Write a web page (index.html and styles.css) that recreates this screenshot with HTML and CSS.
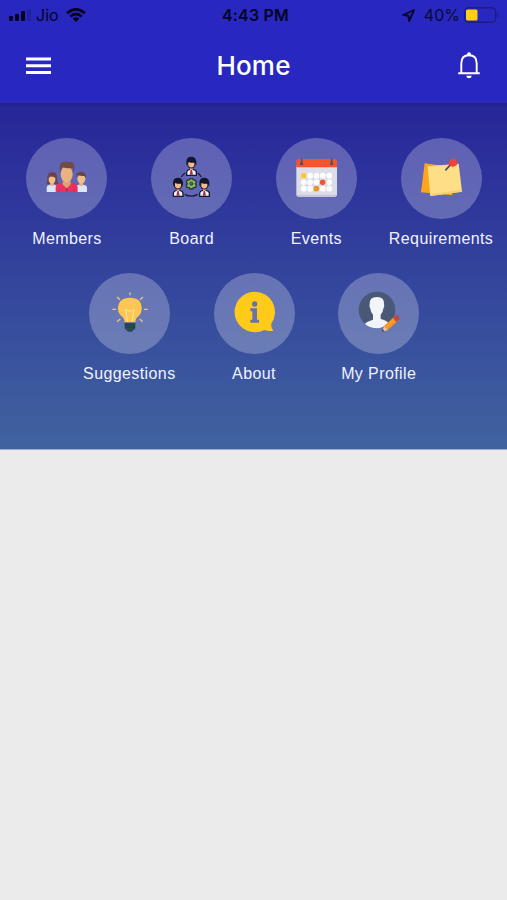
FILE: index.html
```html
<!DOCTYPE html>
<html lang="en">
<head>
<meta charset="utf-8">
<title>Home</title>
<link rel="stylesheet" href="styles.css">
</head>
<body>
<header class="top">
  <div class="status">
    <div class="carrier">
      <svg class="signal" width="24" height="12" viewBox="0 0 24 12"><rect x="0" y="7" width="4" height="5" rx="1"/><rect x="6" y="5" width="4" height="7" rx="1"/><rect x="12" y="2" width="4" height="10" rx="1"/><rect x="18" y="0" width="4" height="12" rx="1" opacity=".18"/></svg>
      <span class="jio">Jio</span>
      <svg class="wifi" width="20" height="14" viewBox="0 0 20 14"><g fill="none" stroke="#050520" stroke-width="2.700"><path d="M1 5.200Q10-2.600 19 5.200"/><path d="M4.200 8.600Q10 3.400 15.800 8.600"/></g><path d="M6.600 10.600Q10 7.700 13.400 10.600L10 14z"/></svg>
    </div>
    <div class="time">4:43 PM</div>
    <div class="power">
      <svg width="13" height="13" viewBox="0 0 13 13"><path d="M12 1L1.200 6.100l5.100.700.800 5.200z" fill="none" stroke="#080830" stroke-width="1.900" stroke-linejoin="round"/></svg>
      <span class="percent">40%</span>
      <svg class="battery" width="36" height="16" viewBox="0 0 36 16"><rect x=".7" y=".7" width="31" height="14.600" rx="4" fill="none" stroke="#1b1b82" stroke-width="1.400"/><path d="M33.200 5.500q2.400 2.500 0 5z" fill="#1b1b82"/><rect x="2" y="2.500" width="11.500" height="11" rx="1.500" fill="#ffd00c"/></svg>
    </div>
  </div>
  <div class="bar">
    <svg class="menu" width="25" height="18" viewBox="0 0 25 18" fill="#fff"><path d="M0 .5h25v3H0zM0 7.200h25v3H0zM0 14h25v3H0z"/></svg>
    <h1>Home</h1>
    <svg class="bell" width="24" height="28" viewBox="0 0 24 28"><path d="M1.200 22.300h21.600M4.300 21.500V12.500Q4.300 4.300 12 4.300t7.700 8.200v9" fill="none" stroke="#fff" stroke-width="1.900"/><circle cx="12" cy="3.200" r="2" fill="#fff"/><path d="M9.200 24.800h5.600q-.5 2.500-2.800 2.500t-2.800-2.500z" fill="#fff"/></svg>
  </div>
</header>
<main class="panel">
  <div class="item"><div class="disc">
    <svg viewBox="19 25 243 243">
      <path d="M81 187v-13q0-7 10-9h12q10 2 10 9v13zM167 187v-13q0-7 10-9h15q10 2 10 9v13z" fill="#dce6f5"/>
      <path d="M80 163q4-8 3-19 1-16 15-16t14 16q0 12 5 19z" fill="#6b4342"/>
      <rect x="92" y="154" width="10" height="15" fill="#eab184"/><ellipse cx="97" cy="149" rx="10" ry="13" fill="#f0bd8d"/><path d="M86 146q3-12 12-12 8 2 10 10-12-4-16-3z" fill="#6b4342"/>
      <rect x="179" y="154" width="11" height="15" fill="#eab184"/><ellipse cx="185" cy="148" rx="12" ry="14" fill="#f0bd8d"/><path d="M170 145v-9q2-9 14-9 16 0 15 17l-5-5q-12 1-20-3z" fill="#654541"/>
      <path d="M108 187v-14q0-10 16-12l8-4h20l8 4q14 2 14 12v14z" fill="#eb315f"/>
      <path d="M128 156h26l-2 10-11 10-11-10z" fill="#dfa274"/><ellipse cx="141" cy="134" rx="18" ry="25" fill="#eab181"/><path d="M121 128q-5-29 9-30 8-3 27 0 10 2 6 30l-4-13q-18 3-31-3z" fill="#6f4b43"/><path d="M140 175h3v12h-3z" fill="#7b3658"/><path d="M119 177v10M163 177v10" stroke="#c4285a" stroke-width="2"/>
    </svg></div><span>Members</span></div>
  <div class="item"><div class="disc">
    <svg viewBox="20 25 243 243">
      <path d="M111 142q4-7 11-12M160 130q7 5 11 12M121 194q20 11 39 0" fill="none" stroke="#171b3a" stroke-width="4"/>
      <g id="director">
        <path d="M127 137v-10q1-6 9-8h10q9 2 10 8v10z" fill="#f4f3f8" stroke="#171b31" stroke-width="4"/>
        <path d="M137 114h8v7l-4 4-4-4z" fill="#efb083"/><ellipse cx="141" cy="103" rx="11" ry="12" fill="#f4b98d" stroke="#171b31" stroke-width="3.500"/>
        <path d="M126 107V94q2-13 15-13t15 14v12l-5-8q-11 2-19-3z" fill="#131729"/><path d="M139 121h4l3 14h-10z" fill="#9b3448"/>
      </g>
      <use href="#director" x="-40" y="63"/><use href="#director" x="39" y="63"/>
      <path d="M137 147h8l2 4 7 1 2 6-3 4 3 5-2 6-7 1-2 4h-8l-2-4-7-1-2-6 3-5-3-4 2-6 7-1z" fill="#83b563" stroke="#26392f" stroke-width="4"/><circle cx="141" cy="162" r="4.500" fill="#5f62b1" stroke="#26392f" stroke-width="3"/>
    </svg></div><span>Board</span></div>
  <div class="item"><div class="disc">
    <svg viewBox="32 25 243 243">
      <path d="M93 108h122v86q0 7-7 7H100q-7 0-7-7z" fill="#dcdde8"/><path d="M93 195h122q-1 6-7 6H100q-6 0-7-6z" fill="#c7c9d7"/>
      <path d="M93 113V94q0-6 6-6h110q6 0 6 6v19z" fill="#f8532b"/><path d="M109 89v12M199 89v12" stroke="#515064" stroke-width="5" stroke-linecap="round"/><circle cx="109" cy="102" r="5" fill="#515064"/><circle cx="199" cy="102" r="5" fill="#515064"/>
      <g fill="none" stroke="#fff" stroke-width="17" stroke-linecap="round" stroke-dasharray="0 19.200"><path d="M115 138h78M115 158h78M115 177h78"/></g>
      <circle cx="115" cy="138" r="8.500" fill="#fbc92e"/><circle cx="172" cy="158" r="8.500" fill="#ef5530"/><circle cx="153" cy="177" r="8.500" fill="#e99424"/>
    </svg></div><span>Events</span></div>
  <div class="item"><div class="disc">
    <svg viewBox="46 25 243 243">
      <path d="M117 101l83 12v84l-94-9z" fill="#ffa51d"/><path d="M126 110l93-8 10 84-95 13z" fill="#ffdf85"/><path d="M134 193l94-13 1 6-95 13z" fill="#f7d17a"/>
      <path d="M179 122l16-17" stroke="#48505f" stroke-width="5"/><path d="M189 105l4-12 18-5 3 18-13 6z" fill="#e63a3d"/><circle cx="202" cy="98" r="11" fill="#f44336"/>
    </svg></div><span>Requirements</span></div>
  <div class="item"><div class="disc">
    <svg viewBox="25 25 243 243">
      <path d="M148 83v9M109 97l9 8M187 97l-9 8M95 134h11M190 134h11M109 171l10-8M186 171l-9-8" stroke="#e9c779" stroke-width="4"/>
      <path d="M132 173q0-12-10-19-11-10-10-24 2-31 36-31t35 31q1 14-9 24-10 7-10 19z" fill="#ffc653"/><path d="M141 172l-6-37 13 5 12-5-6 37" fill="none" stroke="#ffe6a4" stroke-width="3"/>
      <path d="M132 174h32v17q0 4-5 4l-4 6h-14l-4-6q-5 0-5-4z" fill="#294c5b"/><path d="M132 181h32M133 188h30" stroke="#183b48" stroke-width="2"/>
    </svg></div><span>Suggestions</span></div>
  <div class="item"><div class="disc">
    <svg viewBox="25 25 243 243">
      <path d="M147 81a61 61 0 1 0 29 115q12 4 27 2-8-9-6-21A61 61 0 0 0 147 81z" fill="#ffca19"/><circle cx="147" cy="118" r="8" fill="#6972ac"/><path d="M134 131h20v34h6v9h-26v-9h6v-25h-6z" fill="#6972ac"/>
    </svg></div><span>About</span></div>
  <div class="item"><div class="disc">
    <svg viewBox="24 25 243 243">
      <circle cx="141" cy="136" r="55" fill="#4a5878"/><path d="M105 178q2-6 24-13v-15q-7-8-8-18-5-7-2-13-2-22 22-22 23 0 21 22 3 6-2 13-1 10-8 18v13q18 5 23 12-16 16-34 16-20 0-36-13z" fill="#f1f5fa"/>
      <path d="M162 184l34-31 11 12-34 31-13 4z" fill="#f7941f"/><path d="M189 159l10-8q7-1 9 6v7l-9 8z" fill="#b94b46"/><path d="M162 184l11 12-15 4z" fill="#e9c7a0"/><path d="M157 192l6 7-6 3z" fill="#394256"/><path d="M168 188l23-21" stroke="#fdb33f" stroke-width="3"/>
    </svg></div><span>My Profile</span></div>
</main>
</body>
</html>
```
FILE: styles.css
```css
* { box-sizing: border-box; }
body {
  margin: 0;
  min-height: 900px;
  background: #ebebeb;
  font-family: "Liberation Sans", Arial, sans-serif;
}
svg { display: block; flex: none; }
.top {
  height: 103px;
  background: #2828c0;
}
.status {
  display: grid;
  grid-template-columns: 1fr auto 1fr;
  align-items: center;
  height: 30px;
  padding: 0 7px 0 9px;
  color: #050520;
  fill: #050520;
}
.carrier, .power { display: flex; align-items: center; }
.power { justify-content: flex-end; }
.jio { width: 22px; margin: 0 8px 0 3px; font: 16px Inter, sans-serif; }
.time { margin-left: 2px; font: 600 16px Inter, sans-serif; letter-spacing: .2px; }
.percent { margin: 0 4px 0 9px; font: 16px Inter, sans-serif; color: #080830; }
.bar {
  display: grid;
  grid-template-columns: 1fr auto 1fr;
  align-items: center;
  height: 72px;
  padding: 0 26px;
}
h1 {
  margin: 0;
  color: #fff;
  font: 500 26px/32px Inter, sans-serif;
  letter-spacing: .2px;
}
.bell { justify-self: end; margin-bottom: 2px; }
.panel {
  display: flex;
  flex-wrap: wrap;
  justify-content: center;
  align-content: flex-start;
  height: 347px;
  padding: 35px 3px 0 4px;
  background:
    linear-gradient(rgba(32, 32, 120, .5), rgba(32, 32, 120, 0) 5px),
    linear-gradient(#27259a, #40639f);
  border-bottom: 1px solid #9caac8;
}
.item {
  display: flex;
  flex-direction: column;
  align-items: center;
  width: 124.7px;
  height: 135px;
  color: #f0f2ff;
}
.item span {
  margin-top: 10px;
  font-size: 16px;
  line-height: 20px;
  letter-spacing: .4px;
  white-space: nowrap;
}
.disc {
  width: 81px;
  height: 81px;
  border-radius: 50%;
  background: rgba(255, 255, 255, .25);
}
.disc svg { width: 81px; height: 81px; }
```
